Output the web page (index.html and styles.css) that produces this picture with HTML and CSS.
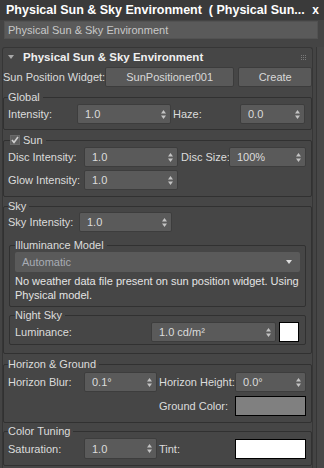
FILE: index.html
```html
<!DOCTYPE html>
<html>
<head>
<title>Physical Sun &amp; Sky Environment</title>
<link rel="stylesheet" href="styles.css">
</head>
<body>
<div class="title-bar">
    <span class="title-text">Physical Sun &amp; Sky Environment&nbsp; ( Physical Sun...</span>
    <span class="close-btn">x</span>
</div>
<div class="name-field">Physical Sun &amp; Sky Environment</div>

<div class="main">
    <div class="rollout">
        <div class="rollout-header">
            <svg class="collapse-arrow" width="6" height="4" viewBox="0 0 6 4"><polygon points="0,0 6,0 3,4" fill="#a8a8a8"/></svg>
            <span class="rollout-title">Physical Sun &amp; Sky Environment</span>
            <svg class="grip" width="5" height="5" viewBox="0 0 5 5">
                <rect x="0" y="0" width="1" height="1"/><rect x="2" y="0" width="1" height="1"/><rect x="4" y="0" width="1" height="1"/>
                <rect x="0" y="2" width="1" height="1"/><rect x="2" y="2" width="1" height="1"/><rect x="4" y="2" width="1" height="1"/>
                <rect x="0" y="4" width="1" height="1"/><rect x="2" y="4" width="1" height="1"/><rect x="4" y="4" width="1" height="1"/>
            </svg>
        </div>

        <div class="row widget-row">
            <span class="label">Sun Position Widget:</span>
            <div class="button widget-button">SunPositioner001</div>
            <div class="button create-button">Create</div>
        </div>

        <!-- Global -->
        <fieldset class="group group-global">
            <legend>Global</legend>
            <div class="row">
                <span class="label w69">Intensity:</span>
                <div class="spinner w94">1.0<svg class="arrows" width="5" height="9" viewBox="0 0 5 9"><polygon points="0,3.5 2.5,0 5,3.5"/><polygon points="0,5.5 2.5,9 5,5.5"/></svg></div>
                <span class="label w69 pl2">Haze:</span>
                <div class="spinner w65">0.0<svg class="arrows" width="5" height="9" viewBox="0 0 5 9"><polygon points="0,3.5 2.5,0 5,3.5"/><polygon points="0,5.5 2.5,9 5,5.5"/></svg></div>
            </div>
        </fieldset>

        <!-- Sun -->
        <fieldset class="group group-sun">
            <legend class="check-legend">
                <span class="checkbox"><svg width="8" height="8" viewBox="0 0 8 8"><polyline points="1,4 3,6.5 7,1" fill="none" stroke="#d0d0d0" stroke-width="1.6"/></svg></span>Sun
            </legend>
            <div class="row">
                <span class="label w76">Disc Intensity:</span>
                <div class="spinner w94">1.0<svg class="arrows" width="5" height="9" viewBox="0 0 5 9"><polygon points="0,3.5 2.5,0 5,3.5"/><polygon points="0,5.5 2.5,9 5,5.5"/></svg></div>
                <span class="label w51 pl3">Disc Size:</span>
                <div class="spinner w77">100%<svg class="arrows" width="5" height="9" viewBox="0 0 5 9"><polygon points="0,3.5 2.5,0 5,3.5"/><polygon points="0,5.5 2.5,9 5,5.5"/></svg></div>
            </div>
            <div class="row next-row">
                <span class="label w76">Glow Intensity:</span>
                <div class="spinner w94">1.0<svg class="arrows" width="5" height="9" viewBox="0 0 5 9"><polygon points="0,3.5 2.5,0 5,3.5"/><polygon points="0,5.5 2.5,9 5,5.5"/></svg></div>
            </div>
        </fieldset>

        <!-- Sky -->
        <fieldset class="group group-sky">
            <legend>Sky</legend>
            <div class="row">
                <span class="label w71">Sky Intensity:</span>
                <div class="spinner w93">1.0<svg class="arrows" width="5" height="9" viewBox="0 0 5 9"><polygon points="0,3.5 2.5,0 5,3.5"/><polygon points="0,5.5 2.5,9 5,5.5"/></svg></div>
            </div>

            <fieldset class="subgroup group-illuminance">
                <legend>Illuminance Model</legend>
                <div class="dropdown">Automatic<svg width="6" height="4" viewBox="0 0 6 4"><polygon points="0,0 6,0 3,4" fill="#dcdcdc"/></svg></div>
                <div class="note">No weather data file present on sun position widget. Using Physical model.</div>
            </fieldset>

            <fieldset class="subgroup group-night">
                <legend>Night Sky</legend>
                <div class="row">
                    <span class="label w136">Luminance:</span>
                    <div class="spinner w125">1.0 cd/m²<svg class="arrows" width="5" height="9" viewBox="0 0 5 9"><polygon points="0,3.5 2.5,0 5,3.5"/><polygon points="0,5.5 2.5,9 5,5.5"/></svg></div>
                    <div class="swatch swatch-small white"></div>
                </div>
            </fieldset>
        </fieldset>

        <!-- Horizon & Ground -->
        <fieldset class="group group-horizon">
            <legend>Horizon &amp; Ground</legend>
            <div class="row">
                <span class="label w76">Horizon Blur:</span>
                <div class="spinner w73">0.1°<svg class="arrows" width="5" height="9" viewBox="0 0 5 9"><polygon points="0,3.5 2.5,0 5,3.5"/><polygon points="0,5.5 2.5,9 5,5.5"/></svg></div>
                <span class="label w78 pl2">Horizon Height:</span>
                <div class="spinner w71">0.0°<svg class="arrows" width="5" height="9" viewBox="0 0 5 9"><polygon points="0,3.5 2.5,0 5,3.5"/><polygon points="0,5.5 2.5,9 5,5.5"/></svg></div>
            </div>
            <div class="row ground-row">
                <span class="w149"></span>
                <span class="label w78 pl2">Ground Color:</span>
                <div class="swatch w71 gray"></div>
            </div>
        </fieldset>

        <!-- Color Tuning -->
        <fieldset class="group group-tuning">
            <legend>Color Tuning</legend>
            <div class="row tall-row">
                <span class="label w76">Saturation:</span>
                <div class="spinner w73">1.0<svg class="arrows" width="5" height="9" viewBox="0 0 5 9"><polygon points="0,3.5 2.5,0 5,3.5"/><polygon points="0,5.5 2.5,9 5,5.5"/></svg></div>
                <span class="label w78 pl2">Tint:</span>
                <div class="swatch w71 white"></div>
            </div>
        </fieldset>
    </div>
    <div class="scroll-track"></div>
</div>
</body>
</html>
```

FILE: styles.css
```css
body {
    margin: 0;
    width: 324px;
    height: 468px;
    overflow: hidden;
    background: #444444;
    font-family: "Liberation Sans", Arial, sans-serif;
    font-size: 11px;
    color: #dcdcdc;
}

.title-bar {
    height: 20px;
    background: #3a3a3a;
    display: flex;
    align-items: center;
    justify-content: space-between;
    padding: 0 6px;
    font-size: 12.5px;
    font-weight: bold;
    color: #ffffff;
}

.close-btn {
    font-size: 12px;
    margin-right: -1px;
}

.name-field {
    box-sizing: border-box;
    height: 18px;
    margin: 1px 6px 0 4px;
    padding-left: 3px;
    background: #5a5a5a;
    border: 1px solid #525252;
    line-height: 16px;
    color: #c8c8c8;
}

.main {
    display: flex;
    margin-top: 8px;
}

.rollout {
    box-sizing: border-box;
    width: 311px;
    height: 421px;
    margin-left: 2px;
    border: 1px solid #363636;
    border-bottom: none;
    border-radius: 3px 3px 0 0;
    background: #464646;
}

.scroll-track {
    flex: 1;
    margin-left: 3px;
    border-left: 1px solid #363636;
    background: #474747;
}

.rollout-header {
    height: 18px;
    display: flex;
    align-items: center;
    padding-left: 5px;
}

.collapse-arrow {
    margin-right: 9px;
}

.rollout-title {
    font-size: 11.5px;
    font-weight: bold;
    color: #f0f0f0;
}

.grip {
    margin-left: auto;
    margin-right: 6px;
    fill: #7a7a7a;
}

.row {
    display: flex;
    align-items: center;
    height: 20px;
}

.next-row {
    margin-top: 3px;
}

.ground-row {
    margin-top: 4px;
}

.tall-row {
    height: 21px;
}

.widget-row {
    margin-top: 1px;
}

.label {
    white-space: nowrap;
}

.widget-row .label {
    width: 102px;
}

.button {
    box-sizing: border-box;
    height: 20px;
    line-height: 18px;
    text-align: center;
    background: #595959;
    border: 1px solid #3c3c3c;
    border-radius: 2px;
    color: #d8d8d8;
}

.widget-button {
    width: 130px;
}

.create-button {
    width: 74px;
    margin-left: 4px;
}

.spinner {
    box-sizing: border-box;
    height: 100%;
    display: flex;
    align-items: center;
    justify-content: space-between;
    padding: 0 4px 0 7px;
    background: #5a5a5a;
    border: 1px solid #3d3d3d;
    border-radius: 2px;
    color: #dcdcdc;
}

.arrows {
    fill: #c4c4c4;
}

.swatch {
    box-sizing: border-box;
    height: 20px;
    border: 1px solid #000000;
}

.swatch-small {
    width: 20px;
    margin-left: 3px;
}

.white {
    background: #ffffff;
}

.gray {
    background: #808080;
}

/* group boxes */
.group,
.subgroup {
    margin: 0;
    min-width: 0;
    border: 1px solid #313131;
    border-radius: 2px;
}

.group {
    padding: 1px 5px 5px 4px;
}

.subgroup {
    margin-left: 1px;
    padding: 1px 5px 4px 5px;
}

legend {
    padding: 0 3px 0 0;
    line-height: 12px;
    color: #dcdcdc;
}

.check-legend {
    display: flex;
    align-items: center;
    margin-left: 2px;
}

.checkbox {
    box-sizing: border-box;
    width: 10px;
    height: 10px;
    margin-right: 3px;
    background: #5f5f5f;
    border: 1px solid #6a6a6a;
    display: flex;
    align-items: center;
    justify-content: center;
}

.group-global {
    margin-top: 4px;
}

.group-sun {
    margin-top: 4px;
    padding-bottom: 6px;
}

.group-sky {
    margin-top: 3px;
    padding-top: 0;
    padding-bottom: 8px;
}

.group-illuminance {
    margin-top: 7px;
}

.group-night {
    margin-top: 2px;
    padding-bottom: 2px;
}

.group-horizon {
    margin-top: 4px;
    padding-top: 2px;
    padding-bottom: 6px;
}

.group-tuning {
    margin-top: 2px;
    padding-bottom: 6px;
}

.dropdown {
    box-sizing: border-box;
    height: 20px;
    display: flex;
    align-items: center;
    justify-content: space-between;
    padding: 0 8px 0 7px;
    background: #5a5a5a;
    border-radius: 2px;
    color: #a8acb4;
}

.note {
    margin-top: 2px;
    line-height: 14px;
    color: #e4e4e4;
}

/* fixed column widths */
.w51 { width: 51px; }
.w65 { width: 65px; }
.w69 { width: 69px; }
.w71 { width: 71px; }
.w73 { width: 73px; }
.w76 { width: 76px; }
.w77 { width: 77px; }
.w78 { width: 78px; }
.w93 { width: 93px; }
.w94 { width: 94px; }
.w125 { width: 125px; }
.w136 { width: 136px; }
.w149 { width: 149px; }

.pl2 { box-sizing: border-box; padding-left: 2px; }
.pl3 { box-sizing: border-box; padding-left: 3px; }
```
